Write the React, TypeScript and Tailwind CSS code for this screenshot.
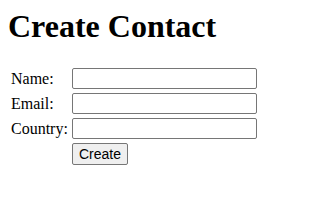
export default function App() {
  const fields = ['Name:', 'Email:', 'Country:'];

  return (
    <div className="p-2 font-['Liberation_Serif',serif] text-base leading-[normal] text-black">
      <h1 className="mt-0 mb-[20px] text-[32px] font-bold leading-[normal]">Create Contact</h1>
      <form>
        <table className="border-separate border-spacing-[2px] leading-[normal]">
          <tbody>
            {fields.map((label) => (
              <tr key={label}>
                <td className="p-[1px] text-left align-middle">{label}</td>
                <td className="p-[1px] align-middle">
                  <input
                    type="text"
                    className="block h-[21px] w-[185px] rounded-[2px] border border-[#767676] bg-white px-[2px] py-[1px] font-['Liberation_Sans',sans-serif] text-[13.33px]"
                  />
                </td>
              </tr>
            ))}
            <tr>
              <td className="p-[1px]"></td>
              <td className="p-[1px]">
                <button
                  type="submit"
                  className="block h-[22px] rounded-[2px] border border-[#767676] bg-[#efefef] px-[6px] font-['Liberation_Sans',sans-serif] text-[14px] leading-[normal] text-black"
                >
                  Create
                </button>
              </td>
            </tr>
          </tbody>
        </table>
      </form>
    </div>
  );
}
